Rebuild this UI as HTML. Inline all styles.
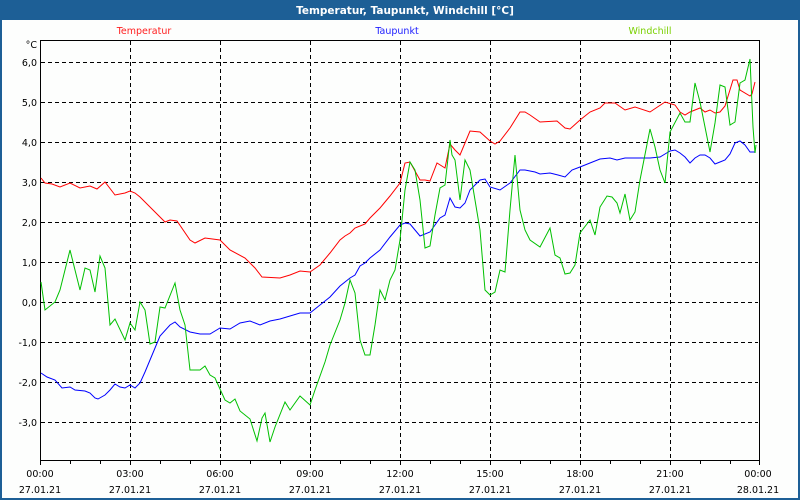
<!DOCTYPE html>
<html><head><meta charset="utf-8"><style>
html,body{margin:0;padding:0;width:800px;height:500px;overflow:hidden;background:#fff}
svg text{font-family:"DejaVu Sans","Liberation Sans",sans-serif;font-size:9.5px}
</style></head><body>
<svg width="800" height="500" xmlns="http://www.w3.org/2000/svg">
<rect x="0" y="0" width="800" height="500" fill="#fdfefd"/>
<rect x="0" y="0" width="800" height="20" fill="#1d5f96"/>
<rect x="0" y="0" width="2" height="500" fill="#1d5f96"/>
<rect x="798" y="0" width="2" height="500" fill="#1d5f96"/>
<rect x="0" y="498" width="800" height="2" fill="#1d5f96"/>
<text x="405" y="14" text-anchor="middle" fill="#fff" style="font-weight:bold;font-size:10.5px">Temperatur, Taupunkt, Windchill [°C]</text>
<text x="144" y="34" text-anchor="middle" fill="#ff2020">Temperatur</text>
<text x="397" y="34" text-anchor="middle" fill="#2020ff">Taupunkt</text>
<text x="650" y="34" text-anchor="middle" fill="#7ad000">Windchill</text>
<g stroke="#000" stroke-width="1" stroke-dasharray="4,3" fill="none">
<path d="M41 62.5H758M41 102.5H758M41 142.5H758M41 182.5H758M41 222.5H758M41 262.5H758M41 302.5H758M41 342.5H758M41 382.5H758M41 422.5H758"/>
<path d="M130.5 41V459M220.5 41V459M310.5 41V459M400.5 41V459M490.5 41V459M580.5 41V459M670.5 41V459"/>
</g>
<path d="M40.5 40.5H759.5V460.5H40.5Z" fill="none" stroke="#000"/>
<path d="M40.5 460V465M70.5 460V464M100.5 460V464M130.5 460V465M160.5 460V464M190.5 460V464M220.5 460V465M250.5 460V464M280.5 460V464M310.5 460V465M340.5 460V464M370.5 460V464M400.5 460V465M430.5 460V464M460.5 460V464M490.5 460V465M520.5 460V464M550.5 460V464M580.5 460V465M610.5 460V464M640.5 460V464M670.5 460V465M700.5 460V464M730.5 460V464M759.5 460V465" stroke="#000"/>
<g fill="#000" text-anchor="end">
<text x="37" y="48">°C</text>
<text x="37" y="66">6,0</text><text x="37" y="106">5,0</text><text x="37" y="146">4,0</text>
<text x="37" y="186">3,0</text><text x="37" y="226">2,0</text><text x="37" y="266">1,0</text>
<text x="37" y="306">0,0</text><text x="37" y="346">-1,0</text><text x="37" y="386">-2,0</text><text x="37" y="426">-3,0</text>
</g>
<g fill="#000" text-anchor="middle">
<text x="40" y="477">00:00</text><text x="130" y="477">03:00</text><text x="220" y="477">06:00</text><text x="310" y="477">09:00</text><text x="400" y="477">12:00</text><text x="490" y="477">15:00</text><text x="580" y="477">18:00</text><text x="670" y="477">21:00</text><text x="758" y="477">00:00</text>
<text x="40" y="493">27.01.21</text><text x="130" y="493">27.01.21</text><text x="220" y="493">27.01.21</text><text x="310" y="493">27.01.21</text><text x="400" y="493">27.01.21</text><text x="490" y="493">27.01.21</text><text x="580" y="493">27.01.21</text><text x="670" y="493">27.01.21</text><text x="758" y="493">28.01.21</text>
</g>
<g fill="none" stroke-width="1">
<polyline stroke="#ff0000" points="41,178 45,183 52,184 60,187 70,183 80,188 90,186 97,189 105,182 115,195 125,193 130,191 135,193 140,197 155,212 165,222 170,220 177,221 190,240 195,243 205,238 220,240 230,250 245,258 255,268 262,277 280,278 290,275 300,271 310,272 320,265 330,253 340,240 345,236 350,233 355,228 360,226 365,224 370,218 380,208 390,196 400,183 405,163 410,162 420,180 425,180 430,181 437,163 445,168 450,144 455,150 460,155 470,131 480,132 490,141 495,144 500,141 510,128 520,112 525,112 530,115 540,122 557,121 565,128 570,129 580,120 590,112 600,108 605,103 615,103 625,110 635,107 650,112 665,102 675,105 680,112 685,115 690,112 700,108 705,112 710,110 715,113 720,112 725,106 733,80 737,80 740,90 750,96 752,94 755,82"/>
<polyline stroke="#0000ff" points="41,373 47,377 55,380 62,388 70,387 75,390 85,391 90,393 95,398 98,399 105,395 110,390 115,384 120,387 125,388 130,385 135,388 140,383 145,372 150,360 160,336 170,325 175,322 180,327 190,332 200,334 210,334 220,328 230,329 240,323 250,321 260,325 270,321 280,319 290,316 300,313 310,313 320,305 330,297 340,286 350,278 355,275 360,266 365,263 370,258 380,250 390,237 400,225 405,223 410,224 420,236 430,232 440,218 445,215 450,198 455,207 460,208 465,203 470,190 480,180 485,179 490,187 500,190 510,183 520,170 525,170 535,172 540,174 550,173 558,175 565,177 572,170 580,167 590,163 600,159 610,158 617,160 625,158 650,158 660,157 665,154 670,151 675,150 680,153 685,157 690,163 695,158 700,155 705,155 710,158 715,164 720,162 725,160 730,154 735,143 740,141 745,145 750,152 755,152"/>
<polyline stroke="#00c000" points="41,282 45,310 55,302 60,290 70,250 72,258 80,290 85,268 90,270 95,292 100,256 105,268 110,325 115,319 125,340 130,323 135,330 140,302 145,310 150,344 155,342 160,307 165,308 175,283 180,310 185,325 190,370 200,370 205,366 210,375 215,378 225,400 230,403 235,399 240,411 250,419 257,441 262,418 265,413 270,442 275,427 285,402 290,410 300,396 310,405 315,390 325,362 330,345 340,320 345,303 350,280 355,293 360,340 365,355 370,355 375,325 380,290 385,300 390,280 395,270 400,240 405,190 410,162 415,170 420,200 425,248 430,246 435,215 440,188 445,185 450,140 452,155 455,160 460,200 465,160 470,170 475,200 480,230 485,290 490,295 495,292 500,270 505,272 510,210 515,155 520,210 525,230 530,240 540,247 550,228 555,255 560,258 565,274 570,273 575,265 580,233 590,220 595,235 600,207 607,196 612,197 617,203 620,213 625,194 630,220 635,212 640,180 650,129 655,147 660,170 665,183 670,132 680,113 685,122 690,122 695,83 700,102 705,127 710,152 715,123 720,85 725,87 730,125 735,122 740,83 745,80 750,59 753,127 755,153 756,145"/>
</g>
</svg>
</body></html>
